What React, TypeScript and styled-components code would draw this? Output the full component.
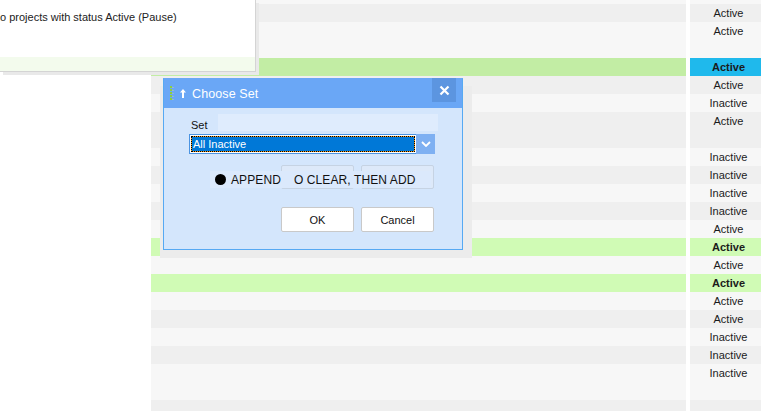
import React from 'react';
import styled, { createGlobalStyle } from 'styled-components';

const Global = createGlobalStyle`
  html, body { margin: 0; padding: 0; background: #fff; overflow: hidden; }
  body { font-family: "Liberation Sans", Arial, sans-serif; }
`;

type Tone = 'light' | 'dark' | 'picked' | 'green';
interface RowData { h: number; tone: Tone; status: string; bold?: boolean }

const rows: RowData[] = [
  { h: 4, tone: 'light', status: '' },
  { h: 18, tone: 'dark', status: 'Active' },
  { h: 36, tone: 'light', status: 'Active' },
  { h: 18, tone: 'picked', status: 'Active', bold: true },
  { h: 18, tone: 'dark', status: 'Active' },
  { h: 18, tone: 'light', status: 'Inactive' },
  { h: 36, tone: 'dark', status: 'Active' },
  { h: 18, tone: 'light', status: 'Inactive' },
  { h: 18, tone: 'dark', status: 'Inactive' },
  { h: 18, tone: 'light', status: 'Inactive' },
  { h: 18, tone: 'dark', status: 'Inactive' },
  { h: 18, tone: 'light', status: 'Active' },
  { h: 18, tone: 'green', status: 'Active', bold: true },
  { h: 18, tone: 'light', status: 'Active' },
  { h: 18, tone: 'green', status: 'Active', bold: true },
  { h: 18, tone: 'light', status: 'Active' },
  { h: 18, tone: 'dark', status: 'Active' },
  { h: 18, tone: 'light', status: 'Inactive' },
  { h: 18, tone: 'dark', status: 'Inactive' },
  { h: 36, tone: 'light', status: 'Inactive' },
  { h: 18, tone: 'dark', status: '' },
];

const mainBg: Record<Tone, string> = { light: '#f7f7f7', dark: '#efefef', picked: '#c2eda4', green: '#d0fbb5' };
const statusBg: Record<Tone, string> = { light: '#f7f7f7', dark: '#efefef', picked: '#1fb9ec', green: '#d0fbb5' };

const Screen = styled.div`
  position: relative;
  width: 761px;
  height: 411px;
  overflow: hidden;
  background: #fff;
`;

const Table = styled.div`
  display: flex;
  flex-direction: column;
`;

const Row = styled.div<{ $h: number }>`
  display: grid;
  grid-template-columns: 151px 535px 4px 71px;
  height: ${p => p.$h}px;
  flex-shrink: 0;
`;

const Blank = styled.div`
  background: #fff;
`;

const MainCell = styled.div<{ $tone: Tone }>`
  background: ${p => mainBg[p.$tone]};
`;

const StatusCell = styled.div<{ $tone: Tone; $bold?: boolean }>`
  background: ${p => statusBg[p.$tone]};
  font-size: 11px;
  line-height: 18px;
  text-align: center;
  padding-left: 6px;
  color: #1b1b1b;
  font-weight: ${p => (p.$bold ? 700 : 400)};
  overflow: hidden;
  white-space: nowrap;
`;

const InfoPanel = styled.div`
  position: absolute;
  left: 0;
  top: 0;
  width: 255px;
  height: 71px;
  background: #fff;
  border-right: 1px solid #d4d4d4;
  border-bottom: 1px solid #d4d4d4;
  box-shadow: 3px 3px 0 #e9e9e9;
  display: flex;
  flex-direction: column;
`;

const InfoText = styled.div`
  padding-top: 10px;
  font-size: 11px;
  line-height: 14px;
  color: #222;
  white-space: nowrap;
`;

const InfoStrip = styled.div`
  margin-top: auto;
  height: 14px;
  background: #f3fbed;
`;

const Dialog = styled.div`
  position: absolute;
  left: 163px;
  top: 78px;
  width: 300px;
  height: 172px;
  box-sizing: border-box;
  border: 1px solid #56a9f3;
  border-top-color: #6aa7f6;
  background: #d4e6fc;
  box-shadow: -3px 8px 0 #ececec, 9px 8px 0 #ececec;
  display: flex;
  flex-direction: column;
`;

const TitleBar = styled.div`
  height: 29px;
  background: #6aa7f6;
  display: flex;
  align-items: center;
  padding-left: 6px;
  gap: 5px;
`;

const TitleText = styled.div`
  flex: 1;
  color: #fff;
  font-size: 12.5px;
  letter-spacing: 0.1px;
`;

const CloseButton = styled.div`
  align-self: flex-start;
  margin-top: -1px;
  margin-right: 6px;
  width: 24px;
  height: 24px;
  background: #5c95e0;
  display: flex;
  align-items: center;
  justify-content: center;
`;

const Body = styled.div`
  padding: 6px 0 0 25px;
  display: flex;
  flex-direction: column;
`;

const LabelRow = styled.div`
  display: flex;
  height: 17px;
`;

const Label = styled.div`
  width: 27px;
  padding-left: 2px;
  padding-top: 5px;
  font-size: 11px;
  line-height: 13px;
  color: #111;
`;

const LightBox = styled.div`
  width: 220px;
  background: #dfecfd;
`;

const SelectBox = styled.div`
  display: flex;
  width: 246px;
  height: 20px;
  margin-top: 3px;
`;

const SelectFrame = styled.div`
  flex: 1;
  display: flex;
  border: 1px solid #4b94e2;
  border-right: none;
  background: #fff;
  padding: 1px;
`;

const FocusRing = styled.div`
  flex: 1;
  display: flex;
  background: #f39a1c;
`;

const SelectValue = styled.div`
  flex: 1;
  border: 1px dotted #000;
  background: #0078d7;
  background-clip: padding-box;
  color: #fff;
  font-size: 11px;
  line-height: 14px;
  padding-left: 1px;
`;

const SelectArrow = styled.div`
  width: 19px;
  background: #7eb0f2;
  display: flex;
  align-items: center;
  justify-content: center;
`;

const OptionsArea = styled.div`
  display: grid;
  margin-top: 11px;
  margin-left: 21px;
`;

const GhostRow = styled.div`
  grid-area: 1 / 1;
  display: flex;
  gap: 7px;
  margin-left: 71px;
`;

const GhostButton = styled.div`
  width: 73px;
  height: 24px;
  box-sizing: border-box;
  background: #dde9f9;
  border: 1px solid #c6d3e3;
  border-radius: 2px;
`;

const RadioStrip = styled.div`
  grid-area: 1 / 1;
  align-self: start;
  margin-top: 6px;
  width: 221px;
  height: 17px;
  background: #dbe9fc;
  display: flex;
  align-items: center;
  padding-left: 5px;
  box-sizing: border-box;
  font-size: 12px;
  color: #111;
  white-space: nowrap;
`;

const Dot = styled.span`
  width: 11px;
  height: 11px;
  border-radius: 50%;
  background: #000;
  margin-right: 5px;
  flex-shrink: 0;
`;

const Option = styled.span<{ $gap?: number }>`
  margin-left: ${p => p.$gap ?? 0}px;
  letter-spacing: 0.1px;
`;

const ButtonRow = styled.div`
  display: flex;
  gap: 7px;
  margin-top: 18px;
  margin-left: 92px;
`;

const Button = styled.div`
  width: 73px;
  height: 25px;
  box-sizing: border-box;
  background: #fff;
  border: 1px solid #c9c9c9;
  border-radius: 2px;
  display: flex;
  align-items: center;
  justify-content: center;
  font-size: 11px;
  color: #111;
`;

const SetIcon = () => (
  <svg width="17" height="18" viewBox="0 0 17 18">
    <line x1="1" y1="1" x2="1" y2="16" stroke="#8ccf3f" strokeWidth="2" strokeDasharray="2 1" />
    <line x1="3" y1="2" x2="3" y2="16" stroke="#b9c7c9" strokeWidth="1" strokeDasharray="1 2" />
    <path d="M13 4 L10 7.5 L12 7.5 L12 13 L14 13 L14 7.5 L16 7.5 Z" fill="#fff" />
  </svg>
);

const CloseIcon = () => (
  <svg width="11" height="11" viewBox="0 0 11 11">
    <path d="M1.5 1.5 L9.5 9.5 M9.5 1.5 L1.5 9.5" stroke="#fff" strokeWidth="2.2" />
  </svg>
);

const Chevron = () => (
  <svg width="10" height="6" viewBox="0 0 10 6">
    <polyline points="1,1 5,5 9,1" fill="none" stroke="#fff" strokeWidth="1.8" />
  </svg>
);

export default function App() {
  return (
    <Screen>
      <Global />
      <Table>
        {rows.map((r, i) => (
          <Row key={i} $h={r.h}>
            <Blank />
            <MainCell $tone={r.tone} />
            <Blank />
            <StatusCell $tone={r.tone} $bold={r.bold}>{r.status}</StatusCell>
          </Row>
        ))}
      </Table>

      <InfoPanel>
        <InfoText>o projects with status Active (Pause)</InfoText>
        <InfoStrip />
      </InfoPanel>

      <Dialog>
        <TitleBar>
          <SetIcon />
          <TitleText>Choose Set</TitleText>
          <CloseButton><CloseIcon /></CloseButton>
        </TitleBar>
        <Body>
          <LabelRow>
            <Label>Set</Label>
            <LightBox />
          </LabelRow>
          <SelectBox>
            <SelectFrame>
              <FocusRing>
                <SelectValue>All Inactive</SelectValue>
              </FocusRing>
            </SelectFrame>
            <SelectArrow><Chevron /></SelectArrow>
          </SelectBox>
          <OptionsArea>
            <GhostRow>
              <GhostButton />
              <GhostButton />
            </GhostRow>
            <RadioStrip>
              <Dot />
              <Option>APPEND</Option>
              <Option $gap={13}>O CLEAR, THEN ADD</Option>
            </RadioStrip>
          </OptionsArea>
          <ButtonRow>
            <Button>OK</Button>
            <Button>Cancel</Button>
          </ButtonRow>
        </Body>
      </Dialog>
    </Screen>
  );
}
